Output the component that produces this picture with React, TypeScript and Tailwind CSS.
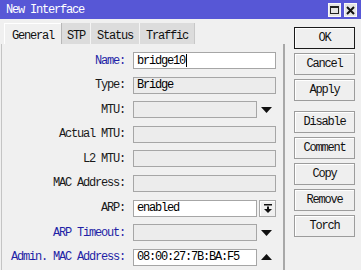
import React from 'react';

const font = { fontFamily: '"Liberation Mono", "DejaVu Sans Mono", monospace' };

function DownArrow() {
  return (
    <svg width="11" height="6" viewBox="0 0 11 6">
      <polygon points="0,0 11,0 5.5,6" fill="#111" />
    </svg>
  );
}

function UpArrow() {
  return (
    <svg width="11" height="6" viewBox="0 0 11 6">
      <polygon points="0,6 11,6 5.5,0" fill="#111" />
    </svg>
  );
}

function BarDownIcon() {
  return (
    <svg width="8" height="9" viewBox="0 0 8 9">
      <rect x="0" y="0" width="8" height="1.5" fill="#111" />
      <rect x="3" y="2.5" width="2" height="2.5" fill="#111" />
      <polygon points="0,5 8,5 4,9" fill="#111" />
    </svg>
  );
}

type Row = {
  label: string;
  blue?: boolean;
  value?: string;
  editable?: boolean;
  cursor?: boolean;
  side?: 'down' | 'up' | 'button';
};

const rows: Row[] = [
  { label: 'Name:', blue: true, value: 'bridge10', editable: true, cursor: true },
  { label: 'Type:', value: 'Bridge' },
  { label: 'MTU:', side: 'down' },
  { label: 'Actual MTU:' },
  { label: 'L2 MTU:' },
  { label: 'MAC Address:' },
  { label: 'ARP:', value: 'enabled', editable: true, side: 'button' },
  { label: 'ARP Timeout:', blue: true, side: 'down' },
  { label: 'Admin. MAC Address:', blue: true, value: '08:00:27:7B:BA:F5', editable: true, side: 'up' },
];

const buttons = ['OK', 'Cancel', 'Apply', 'Disable', 'Comment', 'Copy', 'Remove', 'Torch'];

export default function App() {
  return (
    <div
      className="w-[361px] h-[270px] overflow-hidden bg-[#f0f0f0] text-[12px] tracking-[-1.2px] text-[#111] flex flex-col"
      style={font}
    >
      {/* Title bar */}
      <div className="h-[19px] bg-[#5757d6] flex items-center pl-[6px] pr-[4px] shrink-0">
        <span className="text-white leading-none flex-1">New Interface</span>
        <div className="flex gap-[3px] mt-[1px]">
          <div className="w-[13px] h-[14px] bg-[#e4e4e4] border border-[#f8f8f8] flex items-center justify-center">
            <div className="w-[9px] h-[8px] border border-[#222] border-t-2" />
          </div>
          <div className="w-[13px] h-[14px] bg-[#e4e4e4] border border-[#f8f8f8] flex items-center justify-center">
            <svg width="9" height="9" viewBox="0 0 9 9">
              <path d="M1 1 L8 8 M8 1 L1 8" stroke="#111" strokeWidth="2" />
            </svg>
          </div>
        </div>
      </div>

      <div className="flex flex-1 min-h-0">
        {/* Tabs + panel */}
        <div className="w-[286px] flex flex-col pt-[4px]">
          <div className="flex h-[21px] pl-[4px] shrink-0">
            <div className="px-[7px] pt-[3px] bg-[#f0f0f0] border-l border-t border-white">General</div>
            <div className="px-[5px] pt-[4px] bg-[#dcdcdc] border-l border-[#b8b8b8]">STP</div>
            <div className="px-[6px] pt-[4px] bg-[#dcdcdc] border-l border-[#f4f4f4]">Status</div>
            <div className="px-[6px] pt-[4px] bg-[#dcdcdc] border-l border-[#f4f4f4] border-r border-r-[#c8c8c8]">Traffic</div>
          </div>
          <div className="flex-1 border-l border-[#c4c4c4] border-r-2 border-r-[#a8a8a8] pt-[8px] flex flex-col gap-[7.6px] ml-[1px] mr-[1px]">
            {rows.map((r) => (
              <div key={r.label} className="flex items-center h-[17px]">
                <div className={`w-[124px] text-right pr-[1px] ${r.blue ? 'text-[#1f1fa6]' : 'text-[#1a1a1a]'}`}>
                  {r.label}
                </div>
                <div className="ml-[7px] flex items-center">
                  <div
                    className={`h-[17px] border border-[#a6a6a6] flex items-center pl-[3px] ${
                      r.side ? 'w-[124px]' : 'w-[143px]'
                    } ${r.editable ? 'bg-white' : 'bg-[#ececec]'}`}
                  >
                    <span className="text-black">{r.value}</span>
                    {r.cursor && <span className="w-px h-[13px] bg-black ml-[1px]" />}
                  </div>
                  {r.side === 'down' && (
                    <div className="w-[19px] flex justify-center">
                      <DownArrow />
                    </div>
                  )}
                  {r.side === 'up' && (
                    <div className="w-[19px] flex justify-center">
                      <UpArrow />
                    </div>
                  )}
                  {r.side === 'button' && (
                    <div className="ml-[2px] w-[17px] h-[17px] border border-[#a6a6a6] bg-[#f0f0f0] shadow-[inset_1px_1px_0_#fff] flex items-center justify-center">
                      <BarDownIcon />
                    </div>
                  )}
                </div>
              </div>
            ))}
          </div>
        </div>

        {/* Buttons */}
        <div className="flex flex-col pt-[8px] pl-[8px] gap-[4px]">
          {buttons.map((b, i) => (
            <div
              key={b}
              className={`w-[61px] h-[22px] flex items-center justify-center bg-[#efefef] shadow-[inset_1px_1px_0_#fff] ${
                i === 0 ? 'border border-[#1a1a1a]' : 'border border-[#9c9c9c]'
              } ${i === 3 ? 'mt-[6px]' : ''}`}
            >
              {b}
            </div>
          ))}
        </div>
      </div>
    </div>
  );
}
